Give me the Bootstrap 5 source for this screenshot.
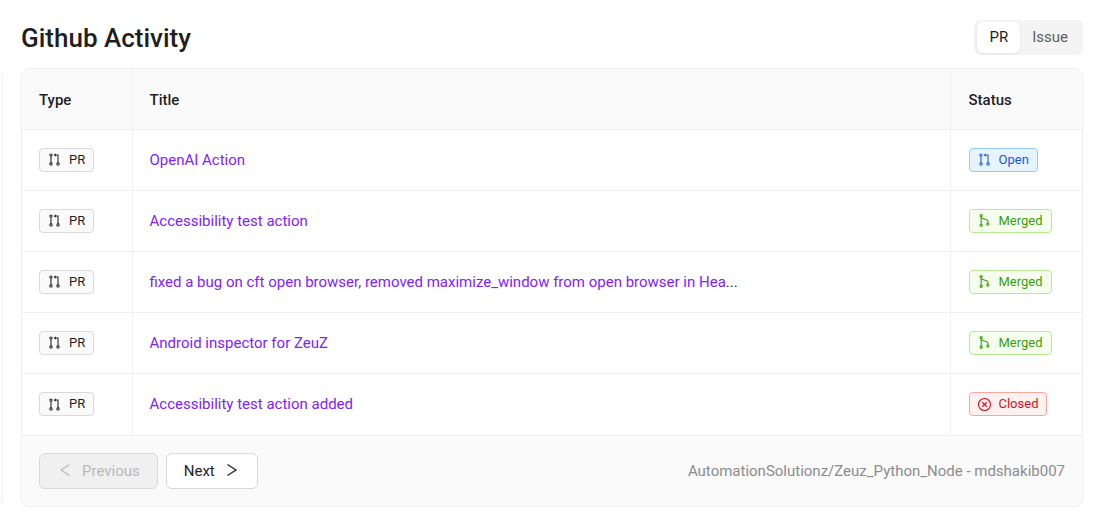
<!DOCTYPE html>
<html lang="en">
<head>
<meta charset="utf-8">
<meta name="viewport" content="width=device-width, initial-scale=1">
<title>Github Activity</title>
<link href="https://cdn.jsdelivr.net/npm/bootstrap@5.3.0/dist/css/bootstrap.min.css" rel="stylesheet">
<script src="https://cdn.jsdelivr.net/npm/bootstrap@5.3.0/dist/js/bootstrap.bundle.min.js" defer></script>
<style>
  body { font-family: Roboto, "Liberation Sans", sans-serif; font-size: 15px; line-height: 24px; color: #1f1f1f; background: #fff; overflow-x: hidden; }
  .page-row { gap: 18px; padding: 20px 28px 0 0; }
  .side-panel { width: 23px; margin: 48px 0 0 -20px; border: 1px solid #f0f0f0; border-radius: 8px; box-shadow: 0 1px 2px rgba(0,0,0,.03); }
  .page-title { font-size: 26px; line-height: 34px; font-weight: 500; }
  .top-bar { margin-bottom: 13px; }
  .segmented { background: #f4f4f4; border-radius: 6px; padding: 2px 3px; }
  .segmented .btn { --bs-btn-padding-x: 11px; --bs-btn-padding-y: 3px; --bs-btn-font-size: 15px; --bs-btn-line-height: 23px; --bs-btn-border-radius: 6px; --bs-btn-color: #5f5f5f; --bs-btn-active-bg: #fff; --bs-btn-active-color: #1f1f1f; --bs-btn-active-border-color: transparent; }
  .segmented .btn-check:checked + .btn { box-shadow: 0 1px 3px rgba(0,0,0,.08); }
  .activity { border: 1px solid #f0f0f0; border-radius: 9px; box-shadow: 0 1px 2px rgba(0,0,0,.05); }
  .activity .table { --bs-table-color: #1f1f1f; --bs-table-bg: #fff; --bs-table-border-color: #f0f0f0; }
  .activity .table th, .activity .table td { padding: 17px; height: 61px; border-bottom: 1px solid #f0f0f0; border-right: 1px solid #f0f0f0; }
  .activity .table tr > :last-child { border-right: 0; padding-left: 18px; }
  .activity .table th { height: 60px; background: #fafafa; font-weight: 500; }
  .activity .table tbody tr:last-child td { height: 62px; }
  .activity .table .col-type { width: 110px; }
  .activity .table .col-status { width: 132px; }
  .title-link { color: #8022ff; text-decoration: none; }
  .title-link:hover { text-decoration: underline; }
  .tag { display: inline-flex; align-items: center; vertical-align: top; gap: 7px; padding: 0 8px 0 7px; font-size: 13px; line-height: 22px; border: 1px solid; border-radius: 4px; }
  .tag svg { width: 15px; height: 15px; }
  .tag-pr { background: #fafafa; border-color: #d9d9d9; color: #1f1f1f; }
  .tag-open { background: #e6f4ff; border-color: #91caff; color: #1858d8; }
  .tag-merged { background: #f6ffed; border-color: #b7eb8f; color: #389e0d; }
  .tag-closed { background: #fff1f0; border-color: #ffa39e; color: #cf1322; }
  .table-foot { background: #fafafa; padding: 17px; border-radius: 0 0 8px 8px; color: #8c8c8c; }
  .pager { gap: 8px; }
  .pager .btn { --bs-btn-padding-x: 17px; --bs-btn-padding-y: 5px; --bs-btn-font-size: 15px; --bs-btn-line-height: 24px; --bs-btn-border-radius: 6px; --bs-btn-color: #1f1f1f; --bs-btn-bg: #fff; --bs-btn-border-color: #d9d9d9; --bs-btn-hover-border-color: #8022ff; --bs-btn-disabled-color: #b8b8b8; --bs-btn-disabled-bg: #f0f0f0; --bs-btn-disabled-border-color: #d9d9d9; --bs-btn-disabled-opacity: 1; gap: 9px; }
  .pager .btn svg { width: 16px; height: 16px; }
</style>
</head>
<body>
<svg class="d-none" aria-hidden="true">
  <symbol id="pull" viewBox="0 0 1024 1024"><path fill="currentColor" d="M788 705.9V192c0-8.8-7.2-16-16-16H602v-68.8c0-6-7-9.4-11.7-5.7L462.7 202.3a7.14 7.14 0 000 11.3l127.5 100.8c4.7 3.7 11.7.4 11.7-5.7V240h114v465.9c-44.2 15-76 56.9-76 106.1 0 61.8 50.2 112 112 112s112-50.2 112-112c.1-49.2-31.7-91-75.9-106.1zM752 860a48.01 48.01 0 010-96 48.01 48.01 0 010 96zM384 212c0-61.8-50.2-112-112-112s-112 50.2-112 112c0 49.2 31.8 91 76 106.1V706c-44.2 15-76 56.9-76 106.1 0 61.8 50.2 112 112 112s112-50.2 112-112c0-49.2-31.8-91-76-106.1V318.1c44.2-15.1 76-56.9 76-106.1zm-160 0a48.01 48.01 0 0196 0 48.01 48.01 0 01-96 0zm96 600a48.01 48.01 0 01-96 0 48.01 48.01 0 0196 0z"/></symbol>
  <symbol id="merge" viewBox="0 0 1024 1024"><g fill="none" stroke="currentColor" stroke-width="72"><circle cx="284" cy="188" r="76"/><circle cx="284" cy="836" r="76"/><circle cx="740" cy="752" r="76"/><path d="M284 264v496M284 340l420 140q36 12 36 48v148"/></g></symbol>
  <symbol id="closed" viewBox="0 0 1024 1024"><g fill="none" stroke="currentColor" stroke-width="76"><circle cx="512" cy="512" r="410"/><path d="M358 358l308 308M666 358L358 666"/></g></symbol>
  <symbol id="prev" viewBox="0 0 16 16"><path fill="none" stroke="currentColor" stroke-width="1.2" d="M12.500 1.500L4 7l8.500 5.500"/></symbol>
  <symbol id="next" viewBox="0 0 16 16"><path fill="none" stroke="currentColor" stroke-width="1.300" d="M3.500 1.500L12 7l-8.500 5.500"/></symbol>
</svg>
<div class="page-row d-flex">
  <aside class="side-panel flex-shrink-0"></aside>
  <main class="flex-grow-1">
    <div class="top-bar d-flex justify-content-between align-items-center">
      <h1 class="page-title m-0">Github Activity</h1>
      <div class="segmented d-flex" role="group" aria-label="Activity type">
        <input type="radio" class="btn-check" name="kind" id="kind-pr" checked>
        <label class="btn" for="kind-pr">PR</label>
        <input type="radio" class="btn-check" name="kind" id="kind-issue">
        <label class="btn" for="kind-issue">Issue</label>
      </div>
    </div>
    <section class="activity">
      <table class="table m-0 align-middle rounded-top overflow-hidden">
        <thead><tr><th class="col-type" scope="col">Type</th><th scope="col">Title</th><th class="col-status" scope="col">Status</th></tr></thead>
        <tbody>
          <tr><td><span class="tag tag-pr"><svg><use href="#pull"/></svg>PR</span></td><td><a class="title-link" href="#">OpenAI Action</a></td><td><span class="tag tag-open"><svg><use href="#pull"/></svg>Open</span></td></tr>
          <tr><td><span class="tag tag-pr"><svg><use href="#pull"/></svg>PR</span></td><td><a class="title-link" href="#">Accessibility test action</a></td><td><span class="tag tag-merged"><svg><use href="#merge"/></svg>Merged</span></td></tr>
          <tr><td><span class="tag tag-pr"><svg><use href="#pull"/></svg>PR</span></td><td><a class="title-link" href="#">fixed a bug on cft open browser, removed maximize_window from open browser in Hea</a>...</td><td><span class="tag tag-merged"><svg><use href="#merge"/></svg>Merged</span></td></tr>
          <tr><td><span class="tag tag-pr"><svg><use href="#pull"/></svg>PR</span></td><td><a class="title-link" href="#">Android inspector for ZeuZ</a></td><td><span class="tag tag-merged"><svg><use href="#merge"/></svg>Merged</span></td></tr>
          <tr><td><span class="tag tag-pr"><svg><use href="#pull"/></svg>PR</span></td><td><a class="title-link" href="#">Accessibility test action added</a></td><td><span class="tag tag-closed"><svg><use href="#closed"/></svg>Closed</span></td></tr>
        </tbody>
      </table>
      <div class="table-foot d-flex justify-content-between">
        <div class="pager d-flex">
          <button type="button" class="btn d-flex align-items-center" disabled><svg><use href="#prev"/></svg>Previous</button>
          <button type="button" class="btn d-flex align-items-center">Next<svg><use href="#next"/></svg></button>
        </div>
        <div class="align-self-center">AutomationSolutionz/Zeuz_Python_Node - mdshakib007</div>
      </div>
    </section>
  </main>
</div>
</body>
</html>
